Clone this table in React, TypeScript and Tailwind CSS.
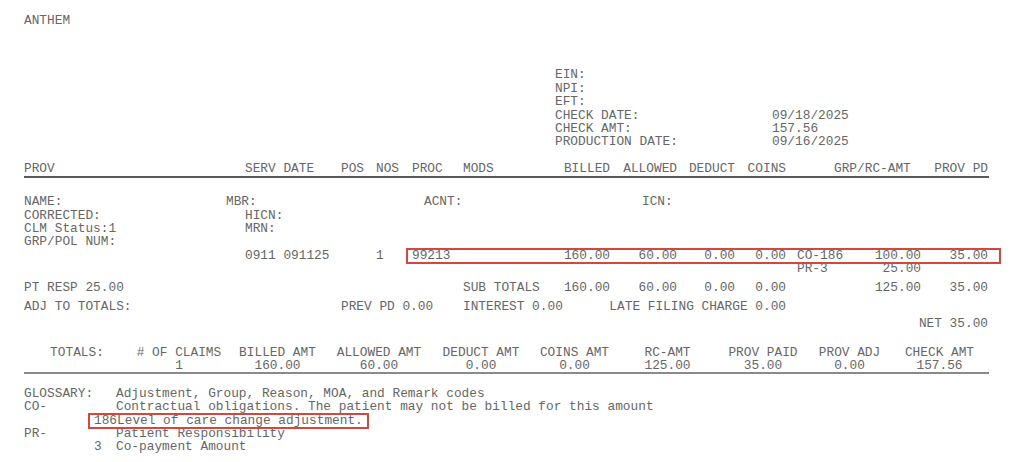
import React from "react";

const GRID =
  "grid grid-cols-[221px_96px_35px_36px_51px_147px_67px_58px_51px_135px_67px] w-[964px]";

export default function App() {
  return (
    <div className="w-[1024px] h-[462px] bg-white overflow-hidden pl-[24px] pt-[14px] font-['Liberation_Mono',monospace] text-[12.8px] leading-[13.4px] text-[#666] whitespace-pre">
      <div>ANTHEM</div>

      {/* header info block */}
      <div className="mt-[41px] ml-[531px] grid grid-cols-[217px_auto]">
        <div>EIN:</div>
        <div></div>
        <div>NPI:</div>
        <div></div>
        <div>EFT:</div>
        <div></div>
        <div>CHECK DATE:</div>
        <div>09/18/2025</div>
        <div>CHECK AMT:</div>
        <div>157.56</div>
        <div>PRODUCTION DATE:</div>
        <div>09/16/2025</div>
      </div>

      {/* column headers */}
      <div className={`${GRID} mt-[13px]`}>
        <div>PROV</div>
        <div>SERV DATE</div>
        <div>POS</div>
        <div>NOS</div>
        <div>PROC</div>
        <div className="flex justify-between">
          <span>MODS</span>
          <span>BILLED</span>
        </div>
        <div className="text-right">ALLOWED</div>
        <div className="text-right">DEDUCT</div>
        <div className="text-right">COINS</div>
        <div className="pl-[48px]">GRP/RC-AMT</div>
        <div className="flex justify-end">PROV PD</div>
      </div>
      <div className="mt-[1px] h-[2px] w-[965px] bg-[#5a5a5a]" />

      {/* claim info */}
      <div className="mt-[17px]">
        <div className="flex">
          <div className="w-[202px]">NAME:</div>
          <div className="w-[198px]">MBR:</div>
          <div className="w-[218px]">ACNT:</div>
          <div>ICN:</div>
        </div>
        <div className="flex">
          <div className="w-[221px]">CORRECTED:</div>
          <div>HICN:</div>
        </div>
        <div className="flex">
          <div className="w-[221px]">CLM Status:1</div>
          <div>MRN:</div>
        </div>
        <div>GRP/POL NUM:</div>

        {/* service line */}
        <div className={`${GRID} relative`}>
          <div></div>
          <div>0911 091125</div>
          <div></div>
          <div>1</div>
          <div>99213</div>
          <div className="text-right">160.00</div>
          <div className="text-right">60.00</div>
          <div className="text-right">0.00</div>
          <div className="text-right">0.00</div>
          <div className="flex justify-between pl-[11px]">
            <span>CO-186</span>
            <span>100.00</span>
          </div>
          <div className="text-right">35.00</div>
          <div className="absolute left-[382px] -top-[1px] w-[595px] h-[16px] border-2 border-[#d4473c]" />
        </div>
        <div className={GRID}>
          <div></div>
          <div></div>
          <div></div>
          <div></div>
          <div></div>
          <div></div>
          <div></div>
          <div></div>
          <div></div>
          <div className="flex justify-between pl-[11px]">
            <span>PR-3</span>
            <span>25.00</span>
          </div>
          <div></div>
        </div>
      </div>

      {/* sub totals */}
      <div className={`${GRID} mt-[5px]`}>
        <div className="col-span-5">PT RESP 25.00</div>
        <div className="flex justify-between">
          <span>SUB TOTALS</span>
          <span>160.00</span>
        </div>
        <div className="text-right">60.00</div>
        <div className="text-right">0.00</div>
        <div className="text-right">0.00</div>
        <div className="text-right">125.00</div>
        <div className="text-right">35.00</div>
      </div>
      <div className={`${GRID} mt-[6px]`}>
        <div className="col-span-2">ADJ TO TOTALS:</div>
        <div className="col-span-3">PREV PD 0.00</div>
        <div>INTEREST 0.00</div>
        <div className="col-span-3 flex justify-end">LATE FILING CHARGE 0.00</div>
        <div className="col-span-2"></div>
      </div>
      <div className={`${GRID} mt-[3px]`}>
        <div className="col-span-9"></div>
        <div className="col-span-2 flex justify-end">NET 35.00</div>
      </div>

      {/* totals */}
      <div className="mt-[16px] flex text-center">
        <div className="w-[106px]">TOTALS:</div>
        <div className="w-[98px] flex flex-col">
          <span># OF CLAIMS</span>
          <span>1</span>
        </div>
        <div className="w-[99px] flex flex-col">
          <span>BILLED AMT</span>
          <span>160.00</span>
        </div>
        <div className="w-[104px] flex flex-col">
          <span>ALLOWED AMT</span>
          <span>60.00</span>
        </div>
        <div className="w-[100px] flex flex-col">
          <span>DEDUCT AMT</span>
          <span>0.00</span>
        </div>
        <div className="w-[87px] flex flex-col">
          <span>COINS AMT</span>
          <span>0.00</span>
        </div>
        <div className="w-[99px] flex flex-col">
          <span>RC-AMT</span>
          <span>125.00</span>
        </div>
        <div className="w-[92px] flex flex-col">
          <span>PROV PAID</span>
          <span>35.00</span>
        </div>
        <div className="w-[81px] flex flex-col">
          <span>PROV ADJ</span>
          <span>0.00</span>
        </div>
        <div className="w-[99px] flex flex-col">
          <span>CHECK AMT</span>
          <span>157.56</span>
        </div>
      </div>
      <div className="-mt-[1px] h-[2px] w-[965px] bg-[#8a8a8a]" />

      {/* glossary */}
      <div className="mt-[13px]">
        <div className="flex">
          <div className="w-[92px]">GLOSSARY:</div>
          <div>Adjustment, Group, Reason, MOA, and Remark codes</div>
        </div>
        <div className="flex">
          <div className="w-[92px]">CO-</div>
          <div>Contractual obligations. The patient may not be billed for this amount</div>
        </div>
        <div className="flex relative">
          <div className="w-[70px]"></div>
          <div className="min-w-[22px]">186</div>
          <div>Level of care change adjustment.</div>
          <div className="absolute left-[64px] -top-[1px] w-[281px] h-[16px] border-2 border-[#d4473c]" />
        </div>
        <div className="flex">
          <div className="w-[92px]">PR-</div>
          <div>Patient Responsibility</div>
        </div>
        <div className="flex">
          <div className="w-[70px]"></div>
          <div className="min-w-[22px]">3</div>
          <div>Co-payment Amount</div>
        </div>
      </div>
    </div>
  );
}
